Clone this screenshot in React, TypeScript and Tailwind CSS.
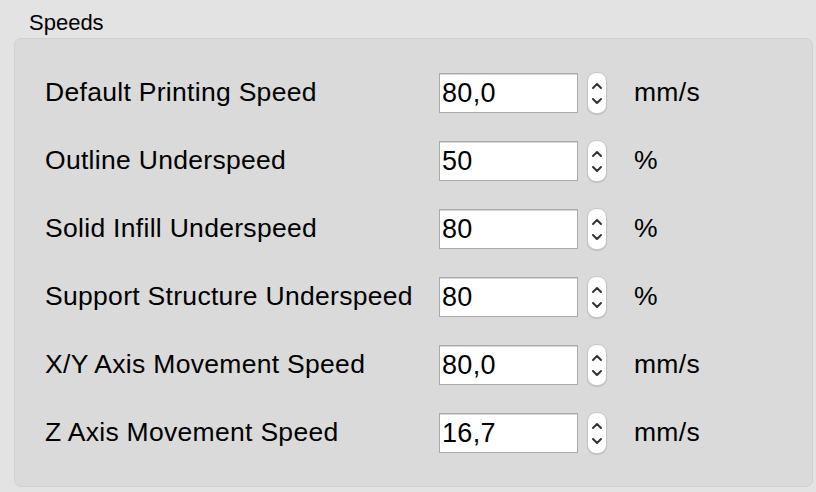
import React from 'react';

type Row = { label: string; value: string; unit: string };

const rows: Row[] = [
  { label: 'Default Printing Speed', value: '80,0', unit: 'mm/s' },
  { label: 'Outline Underspeed', value: '50', unit: '%' },
  { label: 'Solid Infill Underspeed', value: '80', unit: '%' },
  { label: 'Support Structure Underspeed', value: '80', unit: '%' },
  { label: 'X/Y Axis Movement Speed', value: '80,0', unit: 'mm/s' },
  { label: 'Z Axis Movement Speed', value: '16,7', unit: 'mm/s' },
];

function Stepper() {
  return (
    <div className="w-[20px] h-[42px] rounded-[9px] bg-white border border-[#c4c4c4] shadow-[0_1px_1px_rgba(0,0,0,0.12)] flex flex-col items-center justify-center gap-[7px]">
      <svg width="12" height="8" viewBox="0 0 12 8" className="block">
        <path d="M2 6 L6 2 L10 6" fill="none" stroke="#333333" strokeWidth="2" strokeLinecap="round" strokeLinejoin="round" />
      </svg>
      <svg width="12" height="8" viewBox="0 0 12 8" className="block">
        <path d="M2 2 L6 6 L10 2" fill="none" stroke="#333333" strokeWidth="2" strokeLinecap="round" strokeLinejoin="round" />
      </svg>
    </div>
  );
}

export default function App() {
  return (
    <div className="w-[816px] h-[492px] bg-[#e3e3e3] text-black overflow-hidden" style={{ fontFamily: '"Liberation Sans", Arial, sans-serif' }}>
      <div className="pl-[29px] pt-[10px] h-[38px] text-[22px] leading-[26px]">Speeds</div>
      <div className="ml-[14px] w-[799px] h-[449px] rounded-[7px] bg-[#dadada] border border-[#d0d0d0] pt-[20px] pl-[30px]">
        {rows.map((r) => (
          <div key={r.label} className="h-[68px] flex items-center">
            <div className="w-[394px] text-[26.5px] tracking-[0.3px]">{r.label}</div>
            <div className="w-[139px] h-[40px] bg-white border border-[#aaaaaa] shadow-[inset_0_1px_0_#d8d8d8] flex items-center pl-[2px] text-[27px] tracking-[0.3px]">
              {r.value}
            </div>
            <div className="ml-[9px]">
              <Stepper />
            </div>
            <div className="ml-[27px] text-[26.5px] tracking-[0.3px]">{r.unit}</div>
          </div>
        ))}
      </div>
    </div>
  );
}
